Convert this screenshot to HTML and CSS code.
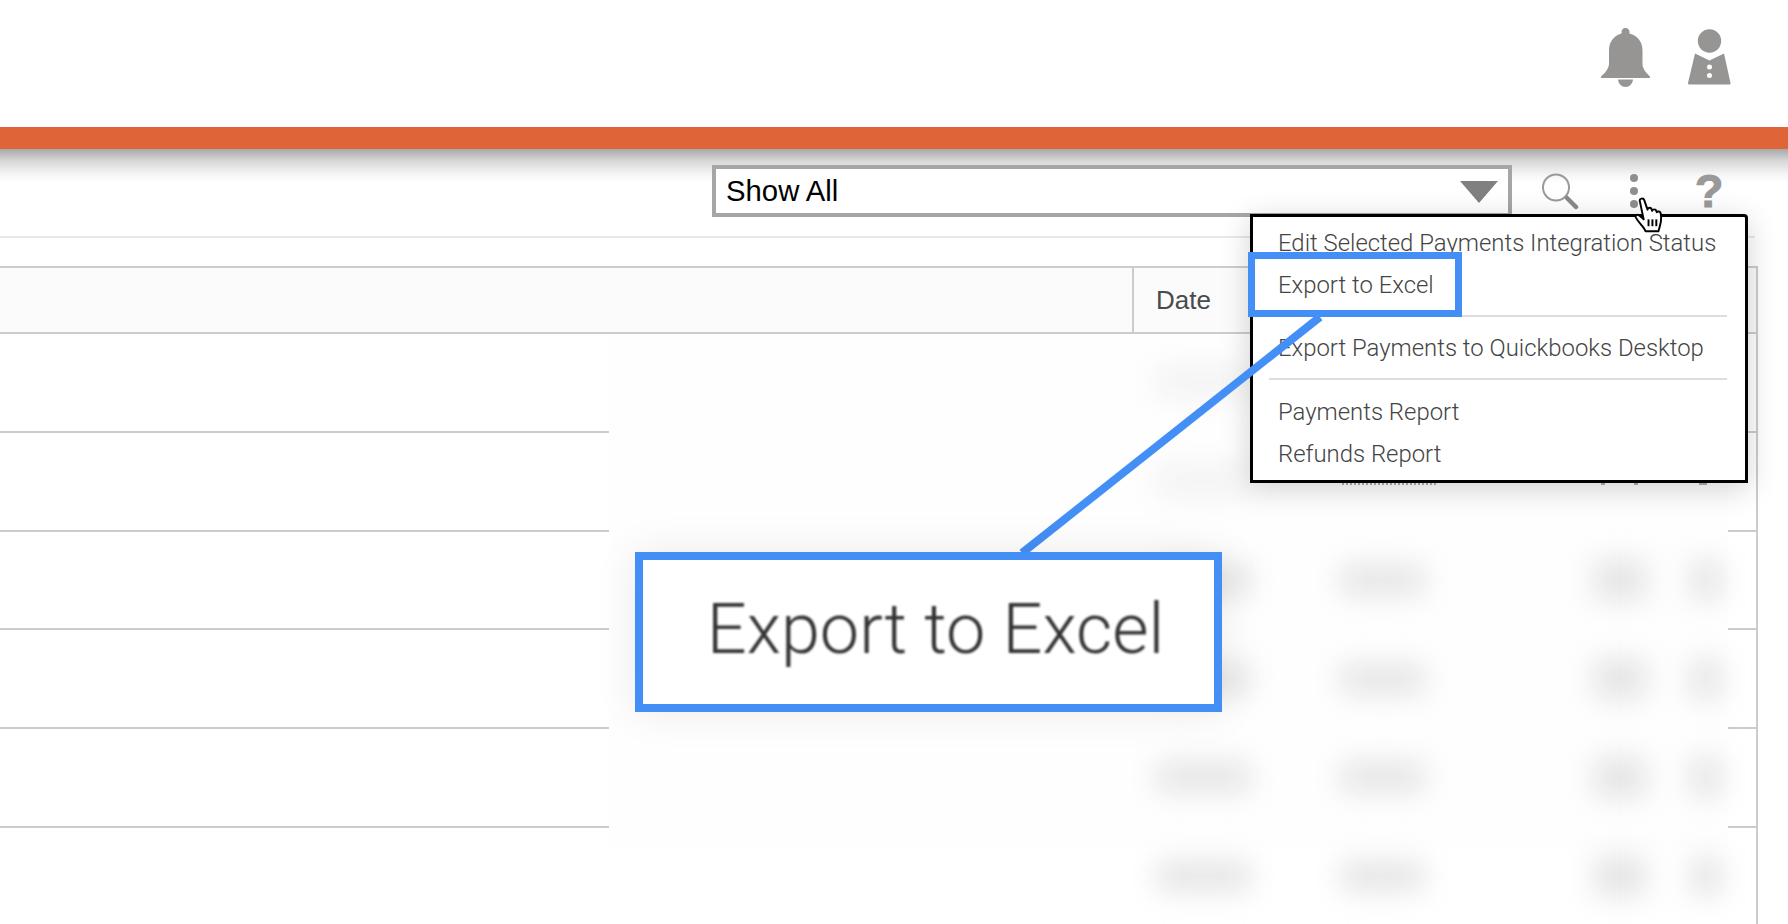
FILE: index.html
```html
<!DOCTYPE html>
<html lang="en">

<head>
    <meta charset="UTF-8">
    <meta name="viewport" content="width=device-width, initial-scale=1.0">
    <title>Payments</title>
    <link rel="stylesheet" href="styles.css">
</head>

<body>
    <header class="top-header">
        <svg class="bell-icon" viewBox="0 0 49 59" aria-hidden="true">
            <path d="M24.5 0c2.500 0 4 1.800 4 4v1.500c8 2 13 8 13 17v13c0 5 3 8.500 7.300 12.800.6.800.2 1.700-.8 1.700H1c-1 0-1.400-.9-.8-1.700C4.500 44.500 8 40.500 8 35.500v-13c0-9 5-15 12.500-17V4c0-2.200 1.500-4 4-4z" />
            <path d="M17 51.500h15a7.500 7.500 0 0 1-15 0z" />
        </svg>
        <svg class="user-icon" viewBox="0 0 43 56" aria-hidden="true">
            <circle cx="21.500" cy="12" r="11.700" />
            <path d="M7 24.500l14.500 7 14.500-7 6.500 29.500c.2 1-.3 1.500-1.200 1.500H1.200C.3 55.500-.2 55 0 54z" />
            <circle class="user-button" cx="21.500" cy="38" r="2.500" />
            <circle class="user-button" cx="21.500" cy="46.500" r="2.500" />
        </svg>
    </header>

    <div class="orange-bar"></div>

    <div class="toolbar">
        <div class="toolbar-inner">
            <div class="filter-select">
                <span>Show All</span>
                <svg class="select-arrow" viewBox="0 0 38 22" aria-hidden="true">
                    <path d="M0 0h38L19 22z" />
                </svg>
            </div>
            <svg class="search-icon" viewBox="0 0 38 37" aria-hidden="true">
                <circle cx="15" cy="14.500" r="13" />
                <line x1="26" y1="25" x2="35" y2="34" />
            </svg>
            <div class="dots-icon">
                <span></span>
                <span></span>
                <span></span>
            </div>
            <div class="help-icon">?</div>
        </div>
    </div>

    <div class="payments-table">
        <div class="table-head">
            <div class="head-cell">Date</div>
        </div>
        <div class="table-row"></div>
        <div class="table-row"></div>
        <div class="table-row"></div>
        <div class="table-row"></div>
        <div class="table-row"></div>
        <div class="table-row table-row-last"></div>
    </div>

    <!-- blurred part of the table -->
    <div class="blur-patch">
        <div class="blur-row blur-row-pale"><i class="b-date"></i></div>
        <div class="blur-row blur-row-pale"><i class="b-date"></i></div>
        <div class="blur-row"><i class="b-date"></i><i class="b-name"></i><i class="b-a"></i><i class="b-b"></i></div>
        <div class="blur-row"><i class="b-date"></i><i class="b-name"></i><i class="b-a"></i><i class="b-b"></i></div>
        <div class="blur-row"><i class="b-date"></i><i class="b-name"></i><i class="b-a"></i><i class="b-b"></i></div>
        <div class="blur-row"><i class="b-date"></i><i class="b-name"></i><i class="b-a"></i><i class="b-b"></i></div>
    </div>

    <div class="menu">
        <div class="menu-item">Edit Selected Payments Integration Status</div>
        <div class="menu-item">Export to Excel</div>
        <div class="menu-divider"></div>
        <div class="menu-item">Export Payments to Quickbooks Desktop</div>
        <div class="menu-divider menu-divider-low"></div>
        <div class="menu-item">Payments Report</div>
        <div class="menu-item">Refunds Report</div>
    </div>

    <!-- slivers of row text showing under the menu -->
    <div class="sliver sliver-name"></div>
    <div class="sliver sliver-a"></div>
    <div class="sliver sliver-b"></div>
    <div class="sliver sliver-c"></div>

    <svg class="callout-line" viewBox="0 0 310 250" aria-hidden="true">
        <line x1="302" y1="7" x2="4" y2="243" />
    </svg>
    <div class="highlight-box"></div>
    <div class="callout-box"><span>Export to Excel</span></div>

    <svg class="hand-cursor" viewBox="0 0 32 37" aria-hidden="true">
        <path d="M6 4c-.5-2.500 3.500-3.500 4.500-1l3.500 10c.2-2.500 3.500-2.500 4.200-.3l.6 1.500c.5-2 3.500-2 4.200 0l.5 1.500c1-1.500 3.700-1 4 1 .8 5 .6 9-.8 13l-1.500 5.500H12l-2-3.500c-2-3-5.500-6-8-10.500-1-2.300 1.500-3.800 3.300-2.300L10 23z" />
        <line x1="15" y1="23" x2="15" y2="30" />
        <line x1="19" y1="23" x2="19" y2="30" />
        <line x1="23" y1="23" x2="23" y2="30" />
    </svg>
</body>

</html>
```

FILE: styles.css
```css
body {
    margin: 0;
    height: 924px;
    overflow: hidden;
    position: relative;
    font-family: "Liberation Sans", Arial, sans-serif;
    background-color: #fff;
}

.top-header {
    height: 127px;
    display: flex;
    justify-content: flex-end;
    align-items: flex-start;
    padding-right: 57px;
    box-sizing: border-box;
    fill: #979494;
}

.bell-icon {
    width: 49px;
    height: 59px;
    margin-top: 28px;
}

.user-icon {
    width: 43px;
    height: 56px;
    margin-top: 29px;
    margin-left: 38px;
}

.user-button {
    fill: #fff;
}

.orange-bar {
    height: 22px;
    background-color: #df6437;
}

.toolbar {
    background: linear-gradient(#a8a8a8, #d8d8d8 12px, #f6f6f6 26px, #fff 34px);
}

.toolbar-inner {
    width: 1755px;
    height: 89px;
    box-sizing: border-box;
    padding: 16px 0 0 712px;
    display: flex;
    align-items: flex-start;
    border-bottom: 2px solid #e8e8e8;
}

.filter-select {
    width: 800px;
    height: 52px;
    box-sizing: border-box;
    border: 4px solid #a6a6a6;
    background-color: #fff;
    display: flex;
    align-items: center;
    justify-content: space-between;
    padding: 0 10px 0 10px;
    font-size: 29.300px;
    color: #000;
}

.select-arrow {
    width: 38px;
    height: 22px;
    fill: #808080;
    margin-top: 2px;
}

.search-icon {
    width: 38px;
    height: 37px;
    margin: 8px 0 0 29px;
    fill: none;
    stroke: #999;
    stroke-width: 2;
}

.search-icon line {
    stroke: #8a8a8a;
    stroke-width: 4.500;
    stroke-linecap: round;
}

.dots-icon {
    margin: 9px 0 0 51px;
    display: flex;
    flex-direction: column;
    gap: 5px;
}

.dots-icon span {
    width: 8px;
    height: 8px;
    border-radius: 50%;
    background-color: #8f8f8f;
}

.help-icon {
    width: 22px;
    margin: 0 0 0 60px;
    font-size: 47px;
    line-height: 52px;
    font-weight: bold;
    color: #999;
    -webkit-text-stroke: 1px #999;
    display: flex;
    justify-content: center;
}

.payments-table {
    width: 1758px;
    margin-top: 28px;
    box-sizing: border-box;
    border-top: 2px solid #ccc;
    border-right: 2px solid #ccc;
}

.table-head {
    height: 66px;
    box-sizing: border-box;
    padding-left: 1132px;
    background-color: #fbfbfb;
    border-bottom: 2px solid #ccc;
}

.head-cell {
    height: 100%;
    box-sizing: border-box;
    border-left: 2px solid #ccc;
    padding-left: 22px;
    display: flex;
    align-items: center;
    font-size: 26px;
    color: #4a4a4a;
}

.table-row {
    height: 98.750px;
    box-sizing: border-box;
    border-bottom: 2px solid #ccc;
}

.table-row-last {
    border-bottom: none;
}

.blur-patch {
    position: absolute;
    left: 609px;
    top: 335px;
    width: 1119px;
    height: 512px;
    background-color: #fefefe;
}

.blur-row {
    height: 98.750px;
    display: flex;
    align-items: center;
    position: relative;
    top: -2px;
}

.blur-row i {
    display: block;
    height: 30px;
    background-color: #e4e4e4;
    filter: blur(14px);
    flex-shrink: 0;
}

.blur-row-pale i {
    background-color: #f2f2f2;
}

.b-date {
    width: 93px;
    margin-left: 548px;
}

.b-name {
    width: 83px;
    margin-left: 91px;
}

.blur-row .b-a {
    width: 52px;
    height: 40px;
    margin-left: 170px;
}

.blur-row .b-b {
    width: 30px;
    height: 40px;
    margin-left: 45px;
}

.menu {
    position: absolute;
    left: 1250px;
    top: 214px;
    width: 498px;
    height: 269px;
    box-sizing: border-box;
    padding-top: 5px;
    border: 3px solid #000;
    border-top-right-radius: 4px;
    background-color: #fff;
    box-shadow: 0 6px 30px rgba(0, 0, 0, 0.18);
}

.menu-item {
    height: 42px;
    padding-left: 25px;
    display: flex;
    align-items: center;
    font-family: Roboto, "Liberation Sans", sans-serif;
    font-weight: 300;
    font-size: 23.900px;
    color: #444;
    white-space: nowrap;
}

.menu-divider {
    height: 2px;
    margin: 9px 18px 10px 16px;
    background-color: #ddd;
}

.menu-divider-low {
    margin-bottom: 11px;
}

.sliver {
    position: absolute;
    top: 483px;
    height: 0;
    border-top: 2px dotted #999;
}

.sliver-name {
    left: 1342px;
    width: 94px;
}

.sliver-a {
    left: 1601px;
    width: 4px;
}

.sliver-b {
    left: 1634px;
    width: 4px;
}

.sliver-c {
    left: 1699px;
    width: 8px;
    border-top-style: solid;
}

.callout-line {
    position: absolute;
    left: 1018px;
    top: 310px;
    width: 310px;
    height: 250px;
    stroke: #448ff5;
    stroke-width: 8;
}

.highlight-box {
    position: absolute;
    left: 1248px;
    top: 252px;
    width: 214px;
    height: 65px;
    box-sizing: border-box;
    border: 7px solid #448ff5;
}

.callout-box {
    position: absolute;
    left: 635px;
    top: 552px;
    width: 587px;
    height: 160px;
    box-sizing: border-box;
    border: 8px solid #448ff5;
    background-color: #fff;
    box-shadow: 0 0 40px rgba(0, 0, 0, 0.08);
    display: flex;
    align-items: center;
    justify-content: center;
    font-family: Roboto, "Liberation Sans", sans-serif;
    font-weight: 300;
    font-size: 70.200px;
    color: #333;
}

.callout-box span {
    filter: blur(1px);
    margin: 0 0 6px 14px;
}

.hand-cursor {
    position: absolute;
    left: 1633px;
    top: 197px;
    width: 33px;
    height: 36px;
    fill: #fff;
    stroke: #000;
    stroke-width: 2;
    stroke-linejoin: round;
}
```
